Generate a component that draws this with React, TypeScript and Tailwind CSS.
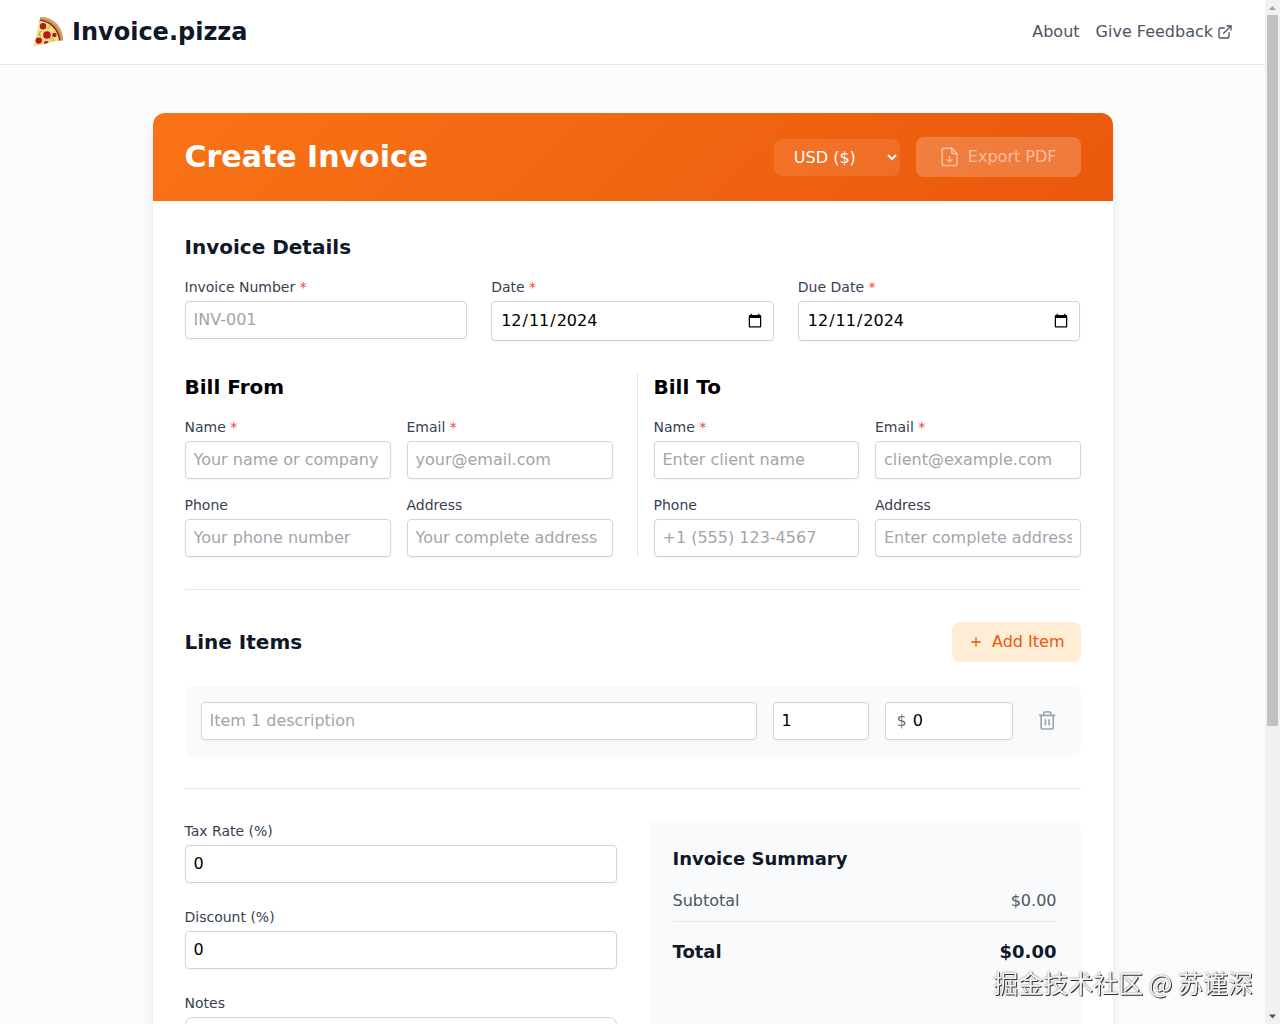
import { useState } from 'react';
import type { ComponentProps } from 'react';
import { FiExternalLink } from 'react-icons/fi';
import { RiAddLine } from 'react-icons/ri';

type FieldProps = ComponentProps<'input'> & {
  id: string;
  label: string;
};

const inputClass =
  'w-full min-w-0 rounded border border-[#d1d5db] bg-white px-2 py-1.5 text-black shadow-xs placeholder:text-[#a1a5ab] focus:border-orange-500 focus:outline-none';

function Field({ id, label, required, ...props }: FieldProps) {
  return (
    <div className="min-w-0">
      <label htmlFor={id} className="block text-sm text-[#374151]">
        {label} {required && <span className="text-[#ef4444]">*</span>}
      </label>
      <input
        id={id}
        required={required}
        className={`mt-1 block ${props.type === 'date' ? 'h-10' : ''} ${inputClass}`}
        {...props}
      />
    </div>
  );
}

function PizzaLogo() {
  return (
    <svg viewBox="0 0 32 32" className="h-8 w-8" aria-hidden="true">
      <path d="M8.2 1C20.5.6 30.6 10.500 31 23.200c0 .9-.6 1.500-1.500 1.500l-2.300-.2L8 4.600z" fill="#c98450" />
      <path d="M8.2 1C20.500.6 30.600 10.500 31 23.200l-1.400.1C28.600 12.200 20 3.100 8.200 2.500z" fill="#dba070" />
      <path d="M7.800 3.700C18.500 4.300 27.400 13 28.300 24.100l-1.800.6L7.300 5.700z" fill="#7e2f1c" />
      <path d="M7.600 4.700C17.600 5.600 25.800 13.900 27 24.400L1.600 30.600z" fill="#f9dd86" />
      <g fill="none" stroke="#9cc64b" strokeWidth="1.200" strokeLinecap="round">
        <path d="M15.500 12.500c2.200.2 2.600-1.600 1.700-3M9.500 15.500c-1.900.3-2.400 1.700-1.700 3.100M18 24.500c-.7-2 1-3.200 2.600-2.400s1.500 2.600.4 3M6.500 18.500l2 1.600" />
      </g>
      <g fill="#b8191d">
        <circle cx="11" cy="10.300" r="3.200" />
        <circle cx="15" cy="19" r="3.800" />
        <circle cx="6.800" cy="24.600" r="3.200" />
        <circle cx="22.400" cy="19" r="2.300" />
        <path d="M12 27.900a2.400 2.400 0 0 1 4.700-1.100z" />
      </g>
    </svg>
  );
}

function ExportIcon() {
  return (
    <svg
      viewBox="0 0 24 24"
      className="h-5 w-5"
      fill="none"
      stroke="currentColor"
      strokeWidth="1.8"
      strokeLinecap="round"
      strokeLinejoin="round"
      aria-hidden="true"
    >
      <path d="M14 1.400H4.800a2.200 2.200 0 0 0-2.200 2.200v16.400a2.200 2.200 0 0 0 2.200 2.200h13.400a2.200 2.200 0 0 0 2.200-2.200V8z" />
      <path d="M14 1.400v4.400A2.200 2.200 0 0 0 16.200 8h4.200" />
      <path d="M11.500 11.500V18M8.500 15.200l3 2.900 3-2.900" />
    </svg>
  );
}

function TrashIcon() {
  return (
    <svg
      viewBox="0 0 24 24"
      className="h-5 w-5"
      fill="none"
      stroke="currentColor"
      strokeWidth="2"
      strokeLinejoin="round"
      aria-hidden="true"
    >
      <path d="M2.500 5.200h19.500M8 5.200V2.200a1 1 0 0 1 1-1h6.500a1 1 0 0 1 1 1v3" />
      <path d="M5 5.200v15a1.400 1.400 0 0 0 1.400 1.400h11.700a1.400 1.400 0 0 0 1.400-1.400v-15" />
      <path d="M10 9.800v7.400M14.500 9.800v7.400" />
    </svg>
  );
}

function Header() {
  return (
    <header className="flex h-[65px] items-center justify-between border-b border-gray-200 bg-white px-8">
      <a href="#" className="flex items-center gap-2 text-2xl font-bold text-gray-900">
        <PizzaLogo />
        Invoice.pizza
      </a>
      <nav className="flex items-center gap-4 text-[#4b5563]">
        <a href="#about" className="hover:text-gray-900">About</a>
        <a href="#feedback" className="flex items-center gap-1 hover:text-gray-900">
          Give Feedback
          <FiExternalLink className="h-4 w-4" />
        </a>
      </nav>
    </header>
  );
}

function Scrollbar() {
  return (
    <div className="flex w-[15px] shrink-0 flex-col items-center bg-[#f1f1f1]" aria-hidden="true">
      <svg viewBox="0 0 15 15" className="h-[15px] w-[15px]">
        <path d="M4 10h7L7.500 6z" fill="#a3a3a3" />
      </svg>
      <div className="w-[11px] grow-[143] bg-[#c1c1c1]"></div>
      <div className="grow-[57]"></div>
      <svg viewBox="0 0 15 15" className="h-[15px] w-[15px]">
        <path d="M4 5.500h7L7.500 9.500z" fill="#505050" />
      </svg>
    </div>
  );
}

export default function App() {
  const [currency, setCurrency] = useState('USD');
  const [items, setItems] = useState([1]);

  const addItem = () => setItems([...items, Math.max(...items) + 1]);

  const removeItem = (id: number) => {
    if (items.length > 1) setItems(items.filter((item) => item !== id));
  };

  return (
    <div className="flex h-screen overflow-hidden bg-[#fafbfd] font-['DejaVu_Sans',sans-serif]">
      <div className="min-w-0 flex-1 overflow-y-auto [scrollbar-width:none]">
        <Header />

        <main className="mx-auto max-w-5xl px-8 py-12">
          <form className="overflow-hidden rounded-xl bg-white shadow-lg">
            <div className="flex items-center justify-between bg-linear-135/srgb from-[#f97316] to-[#ea580c] px-8 py-6">
              <h1 className="text-3xl font-bold text-white">Create Invoice</h1>
              <div className="flex items-center gap-4">
                <select
                  aria-label="Currency"
                  value={currency}
                  onChange={(e) => setCurrency(e.target.value)}
                  className="h-[37px] w-[126px] rounded-lg bg-white/10 px-4 text-white"
                >
                  <option value="USD">USD ($)</option>
                  <option value="EUR">EUR (€)</option>
                  <option value="GBP">GBP (£)</option>
                </select>
                <button
                  type="button"
                  disabled
                  className="flex items-center gap-2 rounded-lg bg-white/20 px-6 py-2 text-white/50"
                >
                  <ExportIcon />
                  Export PDF
                </button>
              </div>
            </div>

            <div className="p-8">
              <section>
                <h2 className="mb-4 text-xl font-semibold text-gray-900">Invoice Details</h2>
                <div className="grid grid-cols-3 gap-6">
                  <Field id="number" label="Invoice Number" placeholder="INV-001" required />
                  <Field id="date" label="Date" type="date" defaultValue="2024-12-11" required />
                  <Field id="due-date" label="Due Date" type="date" defaultValue="2024-12-11" required />
                </div>
              </section>

              <section className="mt-8 grid grid-cols-[107fr_111fr] gap-6 border-b border-gray-200 pb-8">
                <div>
                  <h2 className="mb-4 text-xl font-semibold text-black">Bill From</h2>
                  <div className="grid grid-cols-2 gap-4">
                    <Field id="from-name" label="Name" placeholder="Your name or company" required />
                    <Field id="from-email" label="Email" type="email" placeholder="your@email.com" required />
                    <Field id="from-phone" label="Phone" type="tel" placeholder="Your phone number" />
                    <Field id="from-address" label="Address" placeholder="Your complete address" />
                  </div>
                </div>
                <div className="border-l border-gray-200 pl-4">
                  <h2 className="mb-4 text-xl font-semibold text-black">Bill To</h2>
                  <div className="grid grid-cols-2 gap-4">
                    <Field id="to-name" label="Name" placeholder="Enter client name" required />
                    <Field id="to-email" label="Email" type="email" placeholder="client@example.com" required />
                    <Field id="to-phone" label="Phone" type="tel" placeholder="+1 (555) 123-4567" />
                    <Field id="to-address" label="Address" placeholder="Enter complete address" />
                  </div>
                </div>
              </section>

              <section className="border-b border-gray-200 py-8">
                <div className="mb-6 flex items-center justify-between">
                  <h2 className="text-xl font-semibold text-gray-900">Line Items</h2>
                  <button
                    type="button"
                    onClick={addItem}
                    className="flex items-center gap-2 rounded-lg bg-[#ffedd5] px-4 py-2 text-[#ea580c]"
                  >
                    <RiAddLine className="h-4 w-4" />
                    Add Item
                  </button>
                </div>
                <div className="space-y-4">
                  {items.map((id, index) => (
                    <div key={id} className="flex items-center gap-4 rounded-lg bg-[#f9fafb] p-4">
                      <div className="min-w-0 flex-1">
                        <input
                          aria-label="Description"
                          placeholder={`Item ${index + 1} description`}
                          className={`block ${inputClass}`}
                        />
                      </div>
                      <div className="w-24">
                        <input aria-label="Quantity" type="number" defaultValue="1" className={`block ${inputClass}`} />
                      </div>
                      <label className="flex w-32 items-center gap-1.5 rounded border border-[#d1d5db] bg-white py-1.5 pr-2 pl-[11px] shadow-xs">
                        <span className="text-[#6b7280]">$</span>
                        <input
                          aria-label="Price"
                          type="number"
                          defaultValue="0"
                          className="w-full min-w-0 text-black focus:outline-none"
                        />
                      </label>
                      <button
                        type="button"
                        aria-label="Remove item"
                        onClick={() => removeItem(id)}
                        className="p-2 text-[#9ca3af] hover:text-red-500"
                      >
                        <TrashIcon />
                      </button>
                    </div>
                  ))}
                </div>
              </section>

              <section className="grid grid-cols-2 gap-8 pt-8">
                <div className="space-y-6">
                  <Field id="tax" label="Tax Rate (%)" type="number" defaultValue="0" />
                  <Field id="discount" label="Discount (%)" type="number" defaultValue="0" />
                  <div>
                    <label htmlFor="notes" className="block text-sm text-[#374151]">Notes</label>
                    <textarea
                      id="notes"
                      rows={4}
                      className="mt-1 block w-full rounded-lg border border-[#d1d5db] px-3 py-2 shadow-xs"
                    />
                  </div>
                </div>
                <div className="rounded-lg bg-[#f9fafb] p-6">
                  <h3 className="mb-4 text-lg font-semibold text-gray-900">Invoice Summary</h3>
                  <div className="mb-4 flex justify-between border-b border-gray-200 pb-2 text-[#4b5563]">
                    <span>Subtotal</span>
                    <span>$0.00</span>
                  </div>
                  <div className="flex justify-between text-lg font-bold text-gray-900">
                    <span>Total</span>
                    <span>$0.00</span>
                  </div>
                </div>
              </section>
            </div>
          </form>
        </main>
      </div>

      <Scrollbar />

      <p className="pointer-events-none fixed right-[27px] bottom-[22px] text-[25px] leading-10 text-[#f4f4f4] font-['Noto_Sans_CJK_SC',sans-serif] [text-shadow:1px_1px_0_#333,0_0_2px_#777]">
        掘金技术社区 @ 苏谨深
      </p>
    </div>
  );
}
